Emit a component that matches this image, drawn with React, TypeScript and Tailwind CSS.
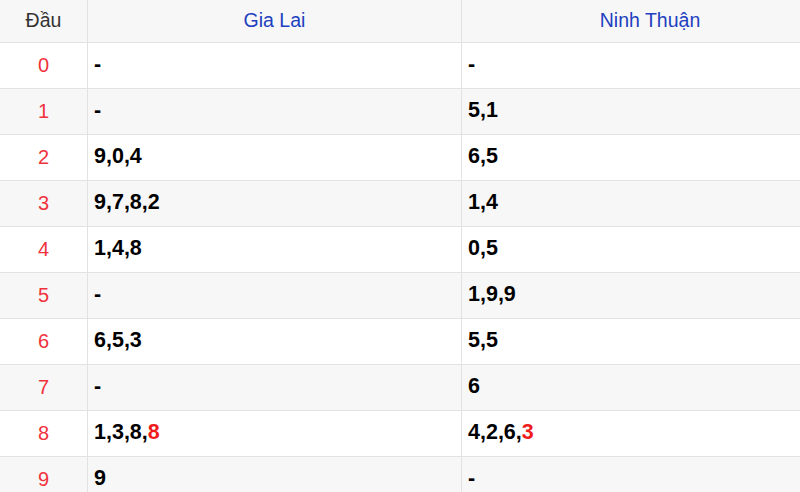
import React from "react";

type Cell = { t: string; hl?: string };
const rows: [string, Cell, Cell][] = [
  ["0", { t: "-" }, { t: "-" }],
  ["1", { t: "-" }, { t: "5,1" }],
  ["2", { t: "9,0,4" }, { t: "6,5" }],
  ["3", { t: "9,7,8,2" }, { t: "1,4" }],
  ["4", { t: "1,4,8" }, { t: "0,5" }],
  ["5", { t: "-" }, { t: "1,9,9" }],
  ["6", { t: "6,5,3" }, { t: "5,5" }],
  ["7", { t: "-" }, { t: "6" }],
  ["8", { t: "1,3,8,", hl: "8" }, { t: "4,2,6,", hl: "3" }],
  ["9", { t: "9" }, { t: "-" }],
];

function V({ c }: { c: Cell }) {
  return (
    <td className="border border-[#e2e2e2] px-[6px] pb-[2px] text-[21.5px] font-bold text-black leading-none">
      {c.t}
      {c.hl && <span className="text-[#f01c1c]">{c.hl}</span>}
    </td>
  );
}

export default function App() {
  return (
    <div className="w-[800px] h-[492px] overflow-hidden bg-white" style={{ fontFamily: '"Liberation Sans", Arial, sans-serif' }}>
      <table className="w-[840px] -ml-px -mt-px border-collapse table-fixed">
        <colgroup>
          <col className="w-[88px]" />
          <col className="w-[374px]" />
          <col />
        </colgroup>
        <thead>
          <tr className="h-[43px] bg-[#f7f7f7]">
            <th className="border border-[#e2e2e2] font-normal text-[19.5px] leading-none text-[#333]">Đầu</th>
            <th className="border border-[#e2e2e2] font-normal text-[19.5px] leading-none text-[#2140c0]">Gia Lai</th>
            <th className="border border-[#e2e2e2] font-normal text-[19.5px] leading-none text-[#2140c0]">Ninh Thuận</th>
          </tr>
        </thead>
        <tbody>
          {rows.map((r, i) => (
            <tr key={i} className={`h-[46px] ${i % 2 === 1 ? "bg-[#f7f7f7]" : "bg-white"}`}>
              <td className="border border-[#e2e2e2] pb-[2px] text-center text-[20px] leading-none text-[#f0323c]">{r[0]}</td>
              <V c={r[1]} />
              <V c={r[2]} />
            </tr>
          ))}
        </tbody>
      </table>
    </div>
  );
}
